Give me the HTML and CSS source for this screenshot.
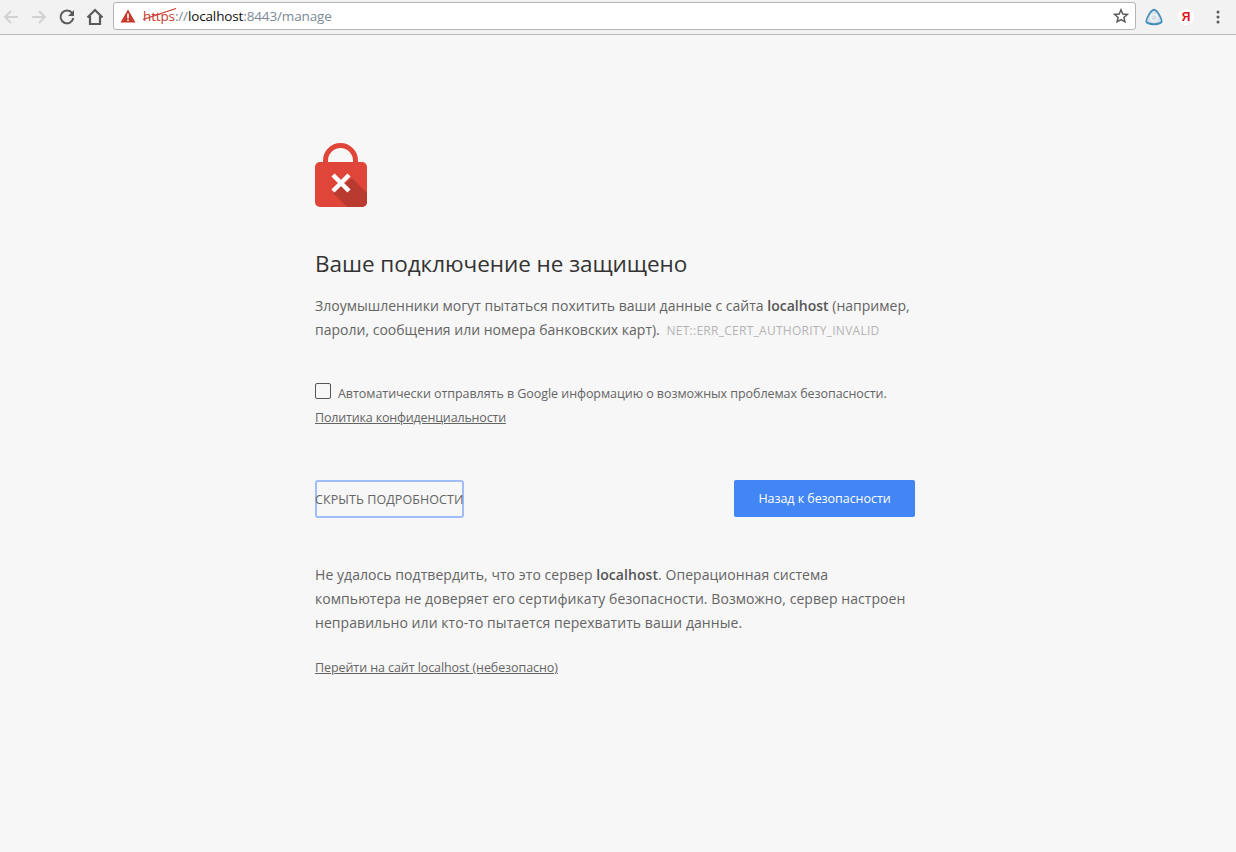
FILE: index.html
```html
<!DOCTYPE html>
<html lang="ru">
<head>
<meta charset="utf-8">
<title>Ошибка конфиденциальности</title>
<link rel="stylesheet" href="styles.css">
</head>
<body>
<header class="toolbar">
  <svg class="nav nav-back" width="18" height="18" viewBox="0 0 18 18"><path d="M16 9H3M9 3L3 9l6 6" fill="none" stroke="#d2d2d2" stroke-width="2"/></svg>
  <svg class="nav nav-fwd" width="18" height="18" viewBox="0 0 18 18"><path d="M2 9h13M9 3l6 6-6 6" fill="none" stroke="#d2d2d2" stroke-width="2"/></svg>
  <svg class="nav nav-reload" width="18" height="18" viewBox="0 0 18 18"><path d="M14.2 5.2A6.4 6.4 0 1 0 15.3 10" fill="none" stroke="#5a5a5a" stroke-width="2"/><path d="M16 2v6h-6z" fill="#5a5a5a"/></svg>
  <svg class="nav nav-home" width="18" height="18" viewBox="0 0 18 18"><path d="M1.5 9.5L9 2l7.500 7.500M4 8v8h10V8" fill="none" stroke="#5a5a5a" stroke-width="2.200"/></svg>
  <div class="omnibox">
    <svg class="warn" width="16" height="14" viewBox="0 0 16 14"><path d="M8 0.500L15.500 13.500H0.500z" fill="#c5392b"/><rect x="7.200" y="4.500" width="1.600" height="5" fill="#fff"/><rect x="7.200" y="10.500" width="1.600" height="1.600" fill="#fff"/></svg>
    <span class="url">
      <span class="scheme">https<svg class="strike" width="36" height="14" viewBox="0 0 36 14"><path d="M1 12.500L34 1.500" stroke="#c5392b" stroke-width="1.200"/></svg></span><span class="dim">://</span><span class="host">localhost</span><span class="dim">:8443/manage</span>
    </span>
    <svg class="star" width="16" height="16" viewBox="0 0 16 16"><path d="M8 1.800l1.800 4.200 4.500.4-3.400 3 1 4.400L8 11.500l-3.900 2.300 1-4.400-3.400-3 4.500-.4z" fill="none" stroke="#5a5a5a" stroke-width="1.500"/></svg>
  </div>
  <svg class="ext-shield" width="18" height="18" viewBox="0 0 18 18"><path d="M9 0.800C12.500 0.800 17.500 10 17.500 13.500c0 2.500-4.500 3.700-8.500 3.700S0.500 16 0.500 13.500C0.500 10 5.500 0.800 9 0.800z" fill="#3f8fb8"/><path d="M9 2.800C11.500 2.800 15.800 10.500 15.800 13c0 1.300-3.800 2.200-6.800 2.200S2.200 14.300 2.200 13C2.200 10.500 6.500 2.800 9 2.800z" fill="#d5dfe5"/><circle cx="9" cy="9.800" r="3.400" fill="none" stroke="#f4f6f7" stroke-width="1.300"/></svg>
  <span class="ext-ya">Я</span>
  <svg class="ext-menu" width="4" height="14" viewBox="0 0 4 14"><circle cx="2" cy="2" r="1.500" fill="#5a5a5a"/><circle cx="2" cy="7" r="1.500" fill="#5a5a5a"/><circle cx="2" cy="12" r="1.500" fill="#5a5a5a"/></svg>
</header>

<main class="interstitial">
  <svg class="lock" width="52" height="64" viewBox="0 0 52 64">
    <path d="M10.500 22V17.500a15 15 0 0 1 30 0V22" fill="none" stroke="#e0453a" stroke-width="5"/>
    <rect x="0" y="19" width="52" height="45" rx="5" fill="#e0453a"/>
    <path d="M37 35L52 50v9a5 5 0 0 1-5 5H32L18 50z" fill="#b93a2e"/>
    <path d="M18 32L34 48M34 32L18 48" stroke="#fff" stroke-width="4.500"/>
  </svg>
  <h1 class="title">Ваше подключение не защищено</h1>
  <p class="lead">Злоумышленники могут пытаться похитить ваши данные с сайта <b>localhost</b> (например, пароли, сообщения или номера банковских карт). <span class="code">NET::ERR_CERT_AUTHORITY_INVALID</span></p>
  <div class="optin">
    <span class="checkbox"></span>
    <span class="optin-text">Автоматически отправлять в Google информацию о возможных проблемах безопасности.</span>
  </div>
  <a class="link privacy" href="#">Политика конфиденциальности</a>
  <div class="actions">
    <button class="btn-details">СКРЫТЬ ПОДРОБНОСТИ</button>
    <button class="btn-back">Назад к безопасности</button>
  </div>
  <p class="details">Не удалось подтвердить, что это сервер <b>localhost</b>. Операционная система<br>компьютера не доверяет его сертификату безопасности. Возможно, сервер настроен<br>неправильно или кто-то пытается перехватить ваши данные.</p>
  <a class="link proceed" href="#">Перейти на сайт localhost (небезопасно)</a>
</main>
</body>
</html>
```
FILE: styles.css
```css
* { box-sizing: border-box; }
html, body { margin: 0; height: 100%; }
body {
  background: #f7f7f7;
  font-family: "Open Sans", "Noto Sans", sans-serif;
  color: #646464;
  overflow: hidden;
}
.toolbar {
  height: 35px;
  display: flex;
  align-items: center;
  background: #f2f2f2;
  border-bottom: 1px solid #b8b8b8;
  padding-left: 2px;
}
.nav { flex: none; margin-right: 10px; }
.nav-home { margin-right: 9px; }
.omnibox {
  flex: none;
  width: 1023px;
  height: 28px;
  margin-top: -2px;
  background: #fff;
  border: 1px solid #b4b4b4;
  border-radius: 3px;
  display: flex;
  align-items: center;
  padding: 0 6px 0 6px;
}
.warn { flex: none; margin-right: 7px; }
.url { flex: 1; font-size: 13.5px; letter-spacing: -0.14px; white-space: nowrap; color: #7b8a94; }
.scheme { position: relative; color: #c5392b; }
.strike { position: absolute; left: -1px; top: 0; }
.host { color: #111; }
.star { flex: none; }
.ext-shield { flex: none; margin-left: 9px; }
.ext-ya {
  flex: none;
  width: 16px;
  height: 16px;
  margin-left: 15px;
  border-radius: 50%;
  background: #fff;
  color: #e0141c;
  font: bold 12px/16px "Liberation Sans Narrow", "Liberation Sans", sans-serif;
  text-align: center;
}
.ext-menu { flex: none; margin-left: 22px; }

.interstitial { width: 600px; margin-left: 315px; padding-top: 108px; }
.lock { display: block; }
.title {
  margin: 39px 0 0;
  font-size: 22.5px;
  line-height: 36px;
  font-weight: 400;
  color: #333;
  letter-spacing: -0.05px;
}
.lead, .details { margin: 0; font-size: 14px; line-height: 24px; }
.lead { margin-top: 12px; letter-spacing: 0.01px; }
.lead b, .details b { font-weight: 600; color: #555; }
.code { margin-left: 3px; font-size: 12px; color: #b4b4b4; letter-spacing: 0.27px; }
.optin { display: flex; align-items: center; margin-top: 38px; height: 24px; }
.checkbox {
  flex: none;
  width: 16px;
  height: 16px;
  margin-top: -5px;
  border: 1px solid #555;
  border-radius: 2px;
}
.optin-text { margin-left: 7px; font-size: 12.500px; letter-spacing: -0.05px; white-space: nowrap; }
.link { display: block; font-size: 12.500px; color: #646464; text-decoration: underline; }
.privacy { margin-top: 3px; line-height: 20px; letter-spacing: -0.17px; }
.actions { display: flex; justify-content: space-between; margin-top: 52px; }
.btn-details {
  width: 149px;
  height: 38px;
  padding: 0;
  background: transparent;
  border: 2px solid #a0bdf8;
  border-radius: 3px;
  font: 12.500px "Open Sans", sans-serif;
  letter-spacing: 0.08px;
  color: #646464;
  white-space: nowrap;
  text-indent: -2px;
}
.btn-back {
  width: 181px;
  height: 37px;
  padding: 0;
  background: #4285f4;
  border: 0;
  border-radius: 2px;
  color: #fff;
  font: 12.500px "Open Sans", sans-serif;
  letter-spacing: -0.05px;
}
.details { margin-top: 45px; letter-spacing: 0.06px; }
.proceed { margin-top: 23px; line-height: 20px; letter-spacing: -0.08px; }
```
